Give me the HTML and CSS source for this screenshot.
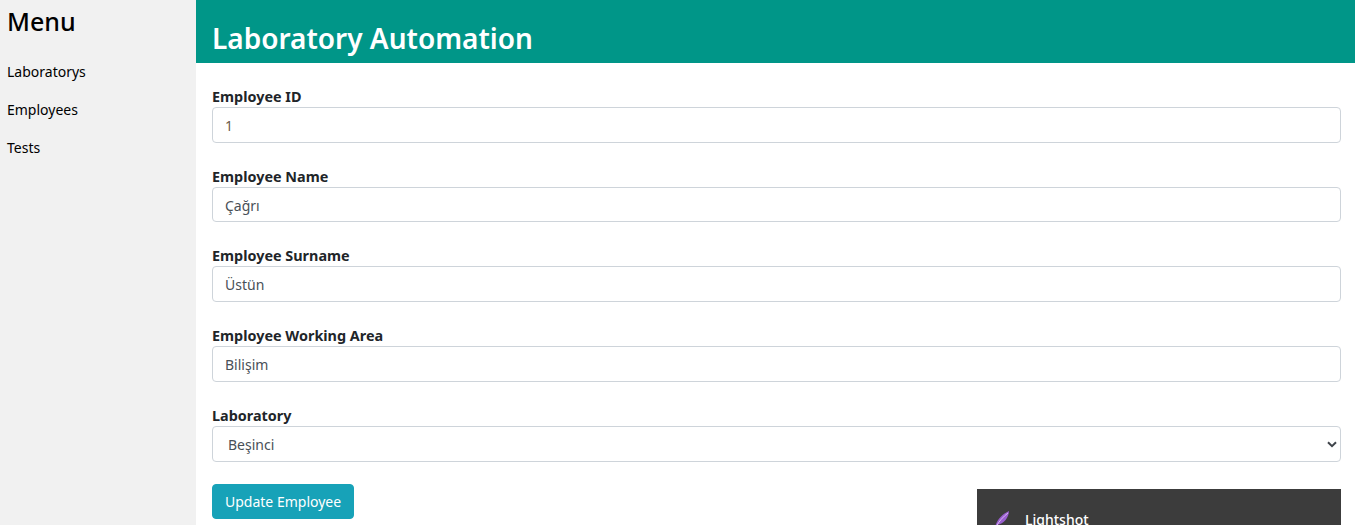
FILE: index.html
```html
<!DOCTYPE html>
<html>

<head>
  <meta charset="utf-8">
  <title>Laboratory Automation</title>
  <link rel="stylesheet" href="styles.css">
</head>

<body>
  <div class="page">
    <div class="sidebar">
      <h3 class="menu-title">Menu</h3>
      <a class="menu-item" href="#">Laboratorys</a>
      <a class="menu-item" href="#">Employees</a>
      <a class="menu-item" href="#">Tests</a>
    </div>

    <div class="main">
      <div class="header">
        <h1>Laboratory Automation</h1>
      </div>

      <form class="employee-form">
        <div class="form-group">
          <label class="lbl" for="employeeId">Employee ID</label>
          <input class="form-control id-input" type="text" id="employeeId" value="1">
        </div>
        <div class="form-group">
          <label class="lbl" for="employeeName">Employee Name</label>
          <input class="form-control" type="text" id="employeeName" value="Çağrı">
        </div>
        <div class="form-group">
          <label class="lbl" for="employeeSurname">Employee Surname</label>
          <input class="form-control" type="text" id="employeeSurname" value="Üstün">
        </div>
        <div class="form-group">
          <label class="lbl" for="workingArea">Employee Working Area</label>
          <input class="form-control" type="text" id="workingArea" value="Bilişim">
        </div>
        <div class="form-group last-group">
          <label class="lbl" for="laboratory">Laboratory</label>
          <div class="select-wrap">
            <select class="form-control select-input" id="laboratory">
              <option>Beşinci</option>
            </select>
            <svg class="select-arrow" width="10" height="7" viewBox="0 0 10 7">
              <path d="M1 1.2 L5 5.2 L9 1.2" fill="none" stroke="#3f444a" stroke-width="2"/>
            </svg>
          </div>
        </div>
        <button class="btn-update" type="button">Update Employee</button>
      </form>
    </div>
  </div>

  <div class="lightshot">
    <svg class="feather" width="18" height="18" viewBox="0 0 18 18">
      <path d="M1 17 C3 10 8 4 15 1 C15 7 10 14 3 15 Z" fill="#9a5fd0"/>
      <path d="M2 17 C5 11 9 7 14 3" fill="none" stroke="#d9b8f2" stroke-width="1"/>
    </svg>
    <span class="lightshot-name">Lightshot</span>
  </div>
</body>

</html>
```

FILE: styles.css
```css
html,
body {
  height: 100%;
}

body {
  margin: 0;
  overflow: hidden;
  background-color: white;
  color: #212529;
  font-family: "Noto Sans", "Open Sans", sans-serif;
  font-size: 14px;
  line-height: 1.5;
}

.page {
  display: flex;
  height: 525px;
}

.sidebar {
  width: 196px;
  flex-shrink: 0;
  background-color: #f1f1f1;
}

.menu-title {
  margin: 0;
  padding: 3px 7px 0;
  height: 53px;
  box-sizing: border-box;
  color: #000;
  font-size: 25px;
  font-weight: 500;
  line-height: 36px;
}

.menu-item {
  display: block;
  height: 38px;
  padding: 8px 7px;
  box-sizing: border-box;
  color: #000;
  line-height: 22px;
  text-decoration: none;
}

.main {
  flex: 1;
}

.header {
  height: 63px;
  padding: 16px 16px 0;
  box-sizing: border-box;
  background-color: #009688;
}

.header h1 {
  margin: 0;
  color: white;
  font-size: 28px;
  font-weight: 600;
  line-height: 44px;
}

.employee-form {
  padding: 23.2px 14px 0 16px;
}

.form-group {
  margin-bottom: 23px;
}

.last-group {
  margin-bottom: 22px;
}

.lbl {
  display: block;
  font-size: 14.4px;
  font-weight: 700;
  line-height: 21px;
}

.form-control {
  display: block;
  width: 100%;
  height: 35.6px;
  padding: 6.5px 12px 5.5px;
  box-sizing: border-box;
  border: 1px solid #ced4da;
  border-radius: 4px;
  background-color: white;
  color: #495057;
  font-family: inherit;
  font-size: 14px;
  line-height: 1.5;
}

.id-input {
  color: #6b5a4a;
}

.select-wrap {
  position: relative;
}

.select-input {
  height: 36px;
  padding-left: 15px;
  appearance: none;
}

.select-arrow {
  position: absolute;
  top: 15px;
  right: 4px;
}

.btn-update {
  display: block;
  height: 35px;
  padding: 6px 12px;
  border: 1px solid #17a2b8;
  border-radius: 4px;
  background-color: #17a2b8;
  color: white;
  font-family: inherit;
  font-size: 14px;
  line-height: 1.5;
}

.lightshot {
  position: fixed;
  left: 977px;
  top: 489px;
  width: 364px;
  height: 36px;
  background-color: #3c3c3c;
  overflow: hidden;
}

.feather {
  position: absolute;
  left: 17px;
  top: 21px;
}

.lightshot-name {
  position: absolute;
  left: 48px;
  top: 20px;
  color: white;
  font-size: 14px;
  font-weight: 500;
}
```
